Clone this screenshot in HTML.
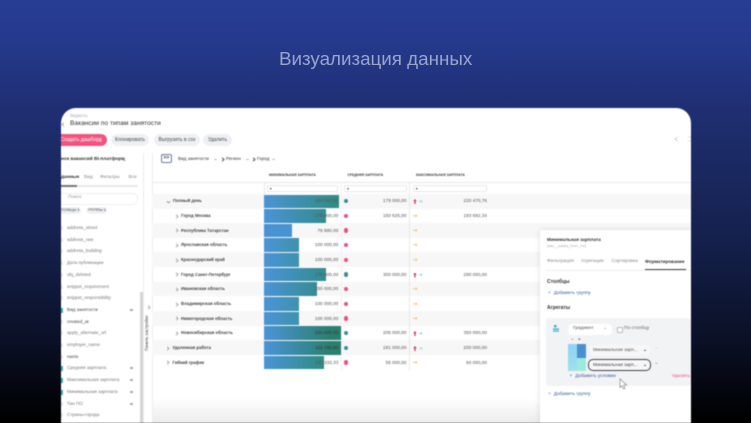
<!DOCTYPE html>
<html lang="ru"><head><meta charset="utf-8"><style>
html,body{margin:0;padding:0;width:751px;height:423px;overflow:hidden}
body{position:relative;background:linear-gradient(180deg,#273d93 0,#253a8d 40px,#1f2f73 105px,#15224f 230px,#0a1026 340px,#000 423px);font-family:"Liberation Sans","Noto Sans CJK JP",sans-serif}
.t{position:absolute;white-space:nowrap;line-height:1}
#title{left:279px;top:50px;font-size:18.8px;color:#9aa5cc}
#card{position:absolute;left:61px;top:108px;width:630px;height:315px;background:#fff;border-radius:15px 15px 0 0;overflow:hidden;filter:blur(.4px)}
#card .a{position:absolute}
#card .t{color:#333}
.btn{position:absolute;top:26px;height:12px;background:#eef0f3;border-radius:6px;font-size:5px;line-height:12px;text-align:center;color:#444;white-space:nowrap}
.row{position:absolute;left:91px;width:539px;height:14.6px}
.alt{background:#f7f7f8}
.bar{position:absolute;left:202.5px;height:13.6px}
.lab{position:absolute;font-size:4.3px;font-weight:bold;color:#444;white-space:nowrap;line-height:1}
.chev{position:absolute;width:2px;height:2px;border-right:.6px solid #aaa;border-top:.6px solid #aaa;transform:rotate(45deg)}
.num{position:absolute;font-size:4.7px;color:#555;white-space:nowrap;line-height:1;text-align:right}
.dot{position:absolute;width:4.4px;height:4.4px;border-radius:50%}
.up{position:absolute;left:352.2px;width:3.6px;height:5px;background:#d03a62;clip-path:polygon(50% 0,100% 45%,68% 45%,68% 100%,32% 100%,32% 45%,0 45%)}
.ic{position:absolute;left:357.6px;width:4.2px;height:3.6px;background:#9adbe8;clip-path:polygon(0 35%,55% 35%,55% 0,100% 50%,55% 100%,55% 65%,0 65%)}
.or{position:absolute;left:352.3px;width:4.4px;height:3.6px;background:#f4c88e;clip-path:polygon(0 35%,55% 35%,55% 0,100% 50%,55% 100%,55% 65%,0 65%)}
.f{position:absolute;left:6px;font-size:4.6px;color:#777;white-space:nowrap;line-height:1}
.cb{position:absolute;left:0;width:2px;height:4px;background:#e6e8ea}
.cb.on{background:#3fb0b0;height:5px}
.hd{position:absolute;font-size:3.4px;font-weight:bold;color:#444;white-space:nowrap;line-height:1}
.fi{position:absolute;top:77px;height:6.8px;border:.6px solid #e8e8ea;border-radius:2px;background:#fff;font-size:4px;color:#555;line-height:6px;padding-left:2px;box-sizing:border-box}
.crumb{font-size:4.6px;top:48.5px}
.dash{position:absolute;top:50.6px;width:2.5px;height:.5px;background:#bbb}
</style></head><body>
<div class="t" id="title">Визуализация данных</div>
<div id="card">
<div class="chev" style="left:1px;top:14.5px;transform:rotate(225deg)"></div>
<div class="t" style="left:9px;top:6px;font-size:4.2px;color:#aaa">Виджеты</div>
<div class="t" style="left:9px;top:12.5px;font-size:6.6px;color:#333">Вакансии по типам занятости</div>
<div class="btn" style="left:-6px;width:52px;background:#f0557f;color:#fff">Создать дашборд</div>
<div class="btn" style="left:50px;width:38px">Клонировать</div>
<div class="btn" style="left:93px;width:46px">Выгрузить в csv</div>
<div class="btn" style="left:142px;width:29px">Удалить</div>
<svg class="a" style="left:612px;top:28px" width="18" height="6" viewBox="0 0 18 6"><path d="M4.5 1 2 3l2.5 2" fill="none" stroke="#bbb" stroke-width=".7"/><path d="M15 1h1M15 5h1M17 1h1M17 5h1" stroke="#bbb" stroke-width=".8"/></svg>

<div class="t" style="left:0;top:50px;font-size:4.8px;font-weight:bold">нок вакансий BI-платформ</div>
<div class="dash" style="left:62px;top:52px"></div>
<div class="t" style="left:0;top:68px;font-size:4.8px;font-weight:bold">данные</div>
<div class="t" style="left:23px;top:68px;font-size:4.8px;color:#888">Вид</div>
<div class="t" style="left:39px;top:68px;font-size:4.8px;color:#888">Фильтры</div>
<div class="t" style="left:67.5px;top:68px;font-size:4.8px;color:#888">Все</div>
<div class="a" style="left:0;top:77px;width:77px;height:1.5px;background:#e8e8ea"></div>
<div class="a" style="left:0;top:77px;width:16px;height:1.5px;background:#777"></div>
<div class="a" style="left:-6px;top:84.5px;width:81px;height:10.5px;border:.6px solid #eee;border-radius:5px"></div>
<div class="t" style="left:7px;top:87.5px;font-size:4.8px;color:#999">Поиск</div>
<div class="a" style="left:-4px;top:99px;width:24px;height:7px;background:#eef0f3;border-radius:4px;font-size:3.6px;line-height:7px;text-align:center;color:#444;white-space:nowrap">СТОЛБЦЫ 3</div>
<div class="a" style="left:25.5px;top:99px;width:20.5px;height:7px;background:#eef0f3;border-radius:4px;font-size:3.6px;line-height:7px;text-align:center;color:#444;white-space:nowrap">ГРУППЫ 3</div>

<div class="cb" style="top:118px"></div><div class="f" style="top:118px">address_street</div>
<div class="cb" style="top:130px"></div><div class="f" style="top:130px">address_raw</div>
<div class="cb" style="top:141px"></div><div class="f" style="top:141px">address_building</div>
<div class="cb" style="top:153px"></div><div class="f" style="top:153px">Дата публикации</div>
<div class="cb" style="top:165px"></div><div class="f" style="top:165px">obj_deleted</div>
<div class="cb" style="top:177px"></div><div class="f" style="top:176.5px">snippet_requirement</div>
<div class="cb" style="top:188px"></div><div class="f" style="top:188px">snippet_responsibility</div>
<div class="cb on" style="top:200px"></div><div class="f" style="top:200px;color:#444">Вид занятости</div>
<div class="cb" style="top:212px"></div><div class="f" style="top:211.5px;color:#444">created_at</div>
<div class="cb" style="top:223px"></div><div class="f" style="top:223px">apply_alternate_url</div>
<div class="cb" style="top:235px"></div><div class="f" style="top:235px">employer_name</div>
<div class="cb" style="top:247px"></div><div class="f" style="top:246.5px;color:#444">name</div>
<div class="cb on" style="top:258px"></div><div class="f" style="top:258px">Средняя зарплата</div>
<div class="cb on" style="top:270px"></div><div class="f" style="top:270px">Максимальная зарплата</div>
<div class="cb on" style="top:282px"></div><div class="f" style="top:282px">Минимальная зарплата</div>
<div class="cb" style="top:294px"></div><div class="f" style="top:293.5px">Тип ПО</div>
<div class="cb" style="top:305px"></div><div class="f" style="top:305px">Страны-города</div>
<div class="a" style="left:69px;top:201px;width:3px;height:2px;background:#aaa"></div>
<div class="a" style="left:69px;top:259px;width:3px;height:1.5px;background:#aaa"></div>
<div class="a" style="left:69px;top:271px;width:3px;height:1.5px;background:#aaa"></div>
<div class="a" style="left:69px;top:283px;width:3px;height:1.5px;background:#aaa"></div>
<div class="a" style="left:69px;top:295px;width:3px;height:1.5px;background:#aaa"></div>

<div class="a" style="left:82px;top:45px;width:.8px;height:270px;background:#ededee"></div>
<div class="a" style="left:79px;top:184px;width:3px;height:131px;background:#d4d5d7"></div>
<div class="a" style="left:91px;top:45px;width:.8px;height:270px;background:#ededee"></div>
<div class="t" style="left:84px;top:243px;font-size:4.2px;color:#444;transform:rotate(-90deg);transform-origin:0 0">Панель настройки</div>
<div class="chev" style="left:85.5px;top:198px"></div>

<div class="a" style="left:100px;top:46px;width:10.7px;height:8.7px;border:.6px solid #6a7aa0;border-radius:2px;box-sizing:border-box;font-size:5px;font-weight:bold;line-height:7px;text-align:center;color:#333">&gt;&gt;</div>
<div class="t crumb" style="left:117px">Вид занятости</div>
<div class="dash" style="left:153px"></div>
<div class="chev" style="left:159.5px;top:49.6px;border-color:#555"></div>
<div class="t crumb" style="left:165px">Регион</div>
<div class="dash" style="left:185px"></div>
<div class="chev" style="left:190.5px;top:49.6px;border-color:#555"></div>
<div class="t crumb" style="left:196px">Город</div>
<div class="dash" style="left:211px"></div>

<div class="hd" style="left:208px;top:66px">МИНИМАЛЬНАЯ ЗАРПЛАТА</div>
<div class="hd" style="left:286.3px;top:66px">СРЕДНЯЯ ЗАРПЛАТА</div>
<div class="hd" style="left:355px;top:66px">МАКСИМАЛЬНАЯ ЗАРПЛАТА</div>
<div class="a" style="left:91px;top:74px;width:539px;height:.7px;background:#e8e8ea"></div>
<div class="fi" style="left:205.7px;width:71px">▾</div>
<div class="fi" style="left:283px;width:62.7px">▾</div>
<div class="fi" style="left:351.7px;width:74px">▾</div>

<div class="row alt" style="top:86px"></div>
<div class="row alt" style="top:115px"></div>
<div class="row alt" style="top:144.4px"></div>
<div class="row alt" style="top:173.6px"></div>
<div class="row alt" style="top:203px"></div>
<div class="row alt" style="top:232px"></div>

<div class="bar" style="top:86.5px;width:75px;background:linear-gradient(90deg,#4b94d6,#2f8c80)"></div>
<div class="bar" style="top:101px;width:62px;background:linear-gradient(90deg,#4b94d6,#338b8e)"></div>
<div class="bar" style="top:115.6px;width:28px;background:#4a93d2"></div>
<div class="bar" style="top:130.3px;width:35px;background:linear-gradient(90deg,#4b94d6,#3f92ad)"></div>
<div class="bar" style="top:145px;width:35px;background:linear-gradient(90deg,#4b94d6,#3f92ad)"></div>
<div class="bar" style="top:159.6px;width:62px;background:linear-gradient(90deg,#4b94d6,#338b8e)"></div>
<div class="bar" style="top:174.3px;width:53px;background:linear-gradient(90deg,#4b94d6,#378c93)"></div>
<div class="bar" style="top:189px;width:35px;background:linear-gradient(90deg,#4b94d6,#3f92ad)"></div>
<div class="bar" style="top:203.6px;width:35px;background:linear-gradient(90deg,#4b94d6,#3f92ad)"></div>
<div class="bar" style="top:218.3px;width:77.5px;background:linear-gradient(90deg,#4b94d6,#2a8070 85%)"></div>
<div class="bar" style="top:233px;width:77.5px;background:linear-gradient(90deg,#4b94d6,#2a8070 85%)"></div>
<div class="bar" style="top:247.6px;width:60px;background:linear-gradient(90deg,#4b94d6,#2f8c80)"></div>

<div class="chev" style="left:106px;top:92px;transform:rotate(135deg)"></div><div class="lab" style="left:112px;top:91px">Полный день</div>
<div class="chev" style="left:114px;top:106.5px"></div><div class="lab" style="left:120px;top:106px">Город Москва</div>
<div class="chev" style="left:114px;top:121px"></div><div class="lab" style="left:120px;top:120.5px">Республика Татарстан</div>
<div class="chev" style="left:114px;top:136px"></div><div class="lab" style="left:120px;top:135px">Ярославская область</div>
<div class="chev" style="left:114px;top:150.5px"></div><div class="lab" style="left:120px;top:150px">Краснодарский край</div>
<div class="chev" style="left:114px;top:165px"></div><div class="lab" style="left:120px;top:164.5px">Город Санкт-Петербург</div>
<div class="chev" style="left:114px;top:180px"></div><div class="lab" style="left:120px;top:179px">Ивановская область</div>
<div class="chev" style="left:114px;top:194.5px"></div><div class="lab" style="left:120px;top:194px">Владимирская область</div>
<div class="chev" style="left:114px;top:209px"></div><div class="lab" style="left:120px;top:208.5px">Нижегородская область</div>
<div class="chev" style="left:114px;top:224px"></div><div class="lab" style="left:120px;top:223px">Новосибирская область</div>
<div class="chev" style="left:105px;top:238.5px"></div><div class="lab" style="left:111.5px;top:238px">Удаленная работа</div>
<div class="chev" style="left:105px;top:253px"></div><div class="lab" style="left:111.5px;top:252.5px">Гибкий график</div>

<div class="num" style="right:352.7px;top:91px">154 552,97</div>
<div class="num" style="right:352.7px;top:106px">179 000,00</div>
<div class="num" style="right:352.7px;top:120.5px">79 880,00</div>
<div class="num" style="right:352.7px;top:135px">100 000,00</div>
<div class="num" style="right:352.7px;top:150px">100 000,00</div>
<div class="num" style="right:352.7px;top:164.5px">179 000,00</div>
<div class="num" style="right:352.7px;top:179px">150 000,00</div>
<div class="num" style="right:352.7px;top:194px">100 000,00</div>
<div class="num" style="right:352.7px;top:208.5px">100 000,00</div>
<div class="num" style="right:352.7px;top:223px;color:#333">220 500,00</div>
<div class="num" style="right:352.7px;top:238px;color:#333">119 760,50</div>
<div class="num" style="right:352.7px;top:252.5px">133 333,33</div>

<div class="dot" style="left:283px;top:91px;background:#3c8f93"></div>
<div class="dot" style="left:283px;top:105.6px;background:#e8527f"></div>
<div class="dot" style="left:283px;top:120.3px;background:#e8527f"></div>
<div class="dot" style="left:283px;top:135px;background:#e8527f"></div>
<div class="dot" style="left:283px;top:149.6px;background:#e8527f"></div>
<div class="dot" style="left:283px;top:164.3px;background:#3c8f93"></div>
<div class="dot" style="left:283px;top:179px;background:#e8527f"></div>
<div class="dot" style="left:283px;top:193.6px;background:#e8527f"></div>
<div class="dot" style="left:283px;top:208.3px;background:#e8527f"></div>
<div class="dot" style="left:283px;top:223px;background:#3c8f93"></div>
<div class="dot" style="left:283px;top:237.6px;background:#3c8f93"></div>
<div class="dot" style="left:283px;top:252.3px;background:#e8527f"></div>

<div class="num" style="right:284.5px;top:91px">179 000,00</div>
<div class="num" style="right:284.5px;top:106px">150 625,00</div>
<div class="num" style="right:284.5px;top:164.5px">300 000,00</div>
<div class="num" style="right:284.5px;top:223px">205 000,00</div>
<div class="num" style="right:284.5px;top:238px">181 000,00</div>
<div class="num" style="right:284.5px;top:252.5px">55 000,00</div>

<div class="up" style="top:91px"></div><div class="ic" style="top:91.5px"></div>
<div class="or" style="top:106px"></div>
<div class="or" style="top:120.5px"></div>
<div class="or" style="top:135px"></div>
<div class="or" style="top:150px"></div>
<div class="up" style="top:164.5px"></div><div class="ic" style="top:165px"></div>
<div class="or" style="top:179px"></div>
<div class="or" style="top:194px"></div>
<div class="or" style="top:208.5px"></div>
<div class="up" style="top:223px"></div><div class="ic" style="top:223.5px"></div>
<div class="up" style="top:238px"></div><div class="ic" style="top:238.5px;background:#c4d3e8"></div>
<div class="or" style="top:252.5px"></div>

<div class="num" style="right:204px;top:91px">220 470,76</div>
<div class="num" style="right:204px;top:106px">193 692,34</div>
<div class="num" style="right:204px;top:164.5px">290 000,00</div>
<div class="num" style="right:204px;top:223px">350 000,00</div>
<div class="num" style="right:204px;top:238px">200 000,00</div>
<div class="num" style="right:204px;top:252.5px">60 000,00</div>
<div class="a" style="left:348.2px;top:74px;width:.8px;height:188px;background:#e8e8ea"></div>
<div class="a" style="left:280px;top:74px;width:.8px;height:188px;background:#f0f0f1"></div>
<div class="a" style="left:203px;top:74px;width:.8px;height:12px;background:#e8e8ea"></div>
<div class="a" style="left:92px;top:290px;width:538px;height:25px;background:linear-gradient(180deg,#fff,#ececed)"></div>

<div class="a" style="left:479px;top:122px;width:151px;height:193px;background:#fff;box-shadow:0 0 6px rgba(0,0,0,.12)"></div>
<div class="t" style="left:486px;top:130px;font-size:4.6px;font-weight:bold;color:#333">Минимальная зарплата</div>
<div class="t" style="left:486px;top:137px;font-size:3.8px;color:#aaa">(кас__salary_from_rur)</div>
<div class="a" style="left:485px;top:161.5px;width:145px;height:.7px;background:#eee"></div>
<div class="t" style="left:486px;top:152px;font-size:4.8px;color:#888">Фильтрация</div>
<div class="t" style="left:520px;top:152px;font-size:4.8px;color:#888">Агрегация</div>
<div class="t" style="left:550.5px;top:152px;font-size:4.8px;color:#888">Сортировка</div>
<div class="t" style="left:584px;top:152px;font-size:4.6px;font-weight:bold;color:#333">Форматирование</div>
<div class="a" style="left:584px;top:161px;width:41px;height:1px;background:#444"></div>
<div class="t" style="left:486px;top:171.5px;font-size:5px;font-weight:bold;color:#333">Столбцы</div>
<div class="t" style="left:487px;top:184px;font-size:4.8px;color:#3c5a99"><span style="margin-right:3px">+</span>Добавить группу</div>
<div class="t" style="left:486px;top:198px;font-size:5px;font-weight:bold;color:#333">Агрегаты</div>
<div class="a" style="left:485px;top:210px;width:145px;height:68px;background:#f2f3f5;border-radius:3px"></div>
<svg class="a" style="left:492px;top:217px" width="7" height="7"><rect x="1" y="0" width="2.5" height="2.5" fill="#3fb5c0"/><rect x="0" y="3.5" width="6" height="1.2" fill="#4a93d2"/><rect x="0" y="5.5" width="6" height="1.2" fill="#3fb5c0"/></svg>
<div class="a" style="left:507px;top:216px;width:44px;height:10.5px;background:#fff;border-radius:4px;font-size:4.8px;line-height:10.5px;padding-left:5px;box-sizing:border-box;color:#555">Градиент<span style="position:absolute;right:5px;color:#999">⌄</span></div>
<div class="a" style="left:556px;top:219px;width:4px;height:4px;border:.5px solid #bbb;border-radius:1px;background:#fff"></div>
<div class="t" style="left:563px;top:219px;font-size:4.8px;color:#666">По столбцу</div>
<div class="t" style="left:510px;top:229.5px;font-size:5px;color:#555;letter-spacing:4px">−+</div>
<div class="a" style="left:507px;top:236px;width:10px;height:27px;background:linear-gradient(180deg,#8fd3f2,#9fe0f0)"></div>
<div class="a" style="left:516px;top:236px;width:9px;height:14px;background:#4a8fd0"></div>
<div class="a" style="left:516px;top:250px;width:9px;height:13px;background:#9eeada"></div>
<div class="a" style="left:529px;top:236.5px;width:60px;height:10px;background:#f7f7f8;border-radius:3px;font-size:4.6px;line-height:10px;padding-left:3px;box-sizing:border-box;color:#555;white-space:nowrap">Минимальная зарп...<span style="position:absolute;right:3px;color:#333;font-weight:bold">⌄</span></div>
<div class="a" style="left:527px;top:250.5px;width:63px;height:12px;background:#f7f7f8;border:.8px solid #444;border-radius:5px;font-size:4.6px;line-height:10.5px;padding-left:4px;box-sizing:border-box;color:#444;white-space:nowrap">Минимальная зарп...<span style="position:absolute;right:3px;color:#333;font-weight:bold">⌄</span></div>
<div class="t" style="left:594px;top:238.5px;font-size:5px;color:#bbb">−</div>
<div class="t" style="left:594px;top:253.5px;font-size:5px;color:#555">−</div>
<div class="t" style="left:508.5px;top:266.5px;font-size:4.8px;color:#3c5a99"><span style="margin-right:3px">+</span>Добавить условие</div>
<div class="t" style="left:610.7px;top:266.5px;font-size:4.8px;color:#e8527f">Удалить</div>
<div class="t" style="left:487px;top:284.5px;font-size:4.8px;color:#3c5a99"><span style="margin-right:3px">+</span>Добавить группу</div>
<svg class="a" style="left:558px;top:270px" width="10" height="12" viewBox="0 0 10 12"><path d="M1 .8V9.5L3 7.6 4.5 11 6 10.3 4.7 7H7.5Z" fill="#fff" stroke="#777" stroke-width=".6"/></svg>
</div>
</body></html>
